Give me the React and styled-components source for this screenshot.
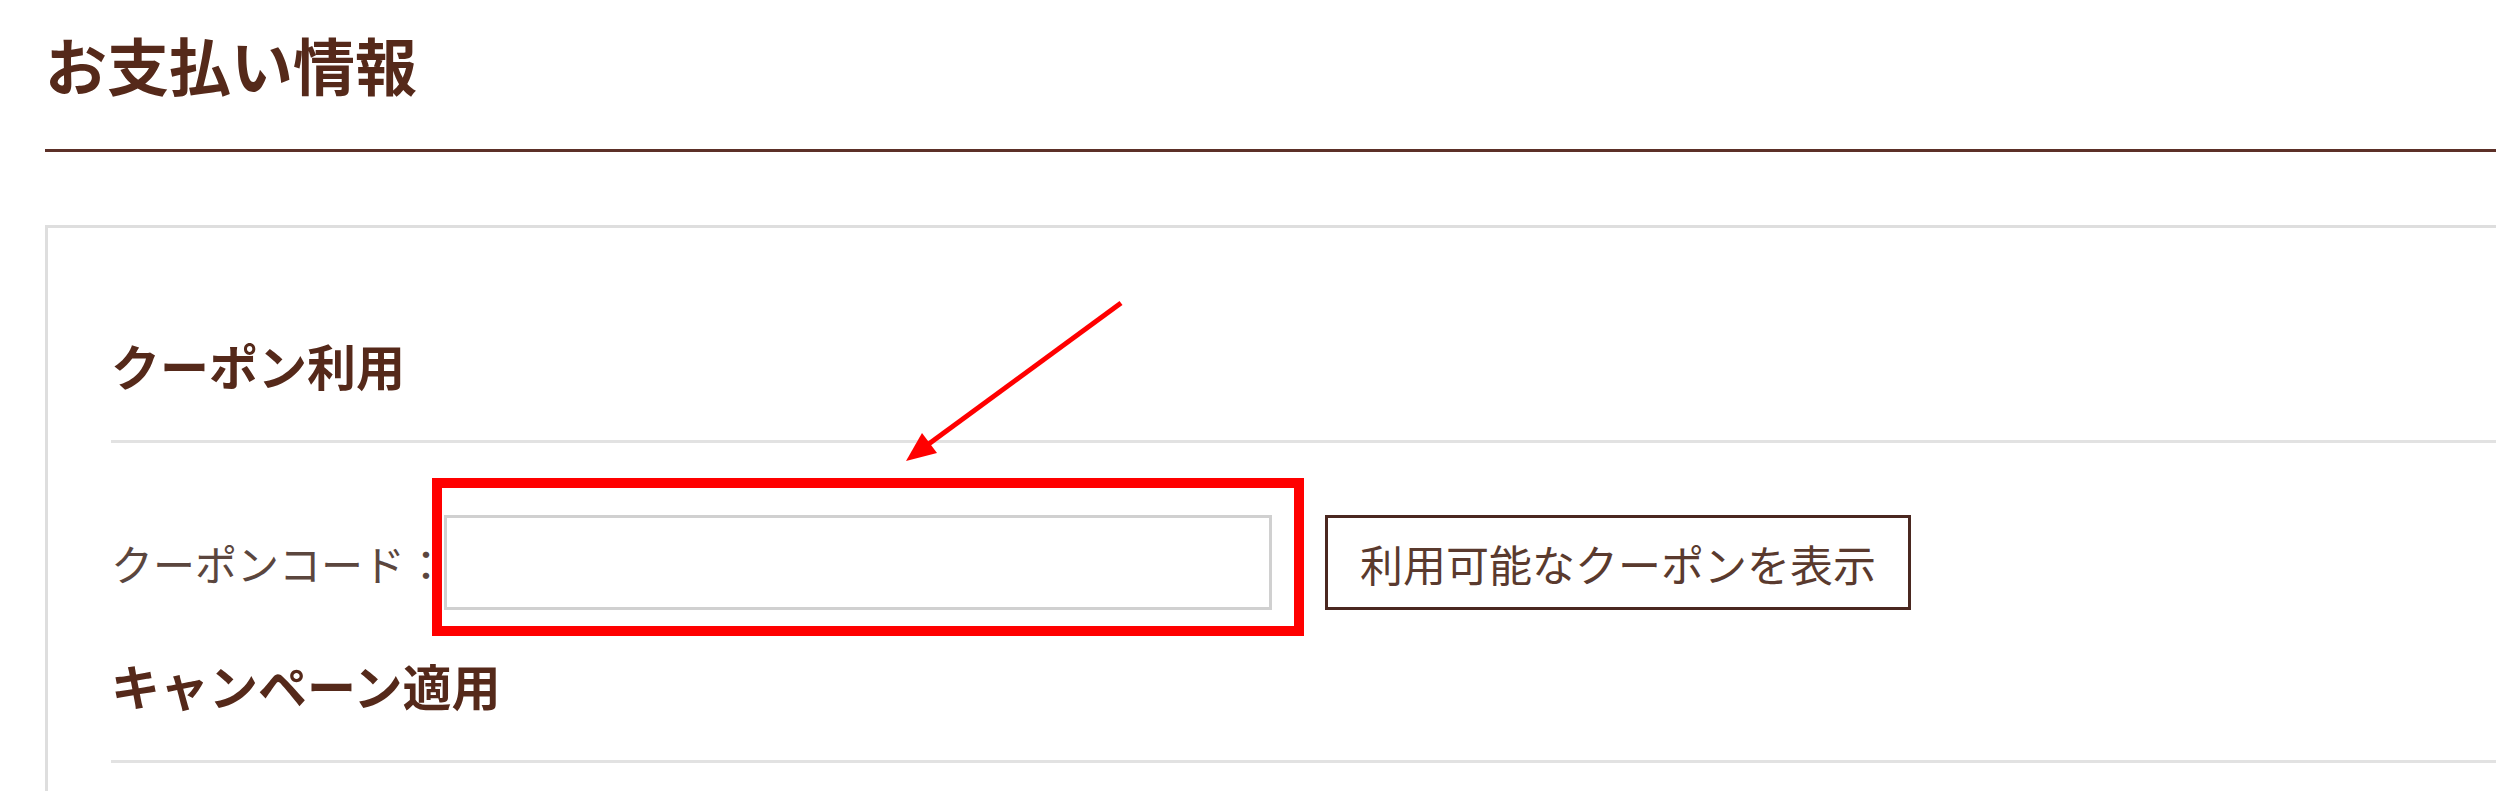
import styled, { createGlobalStyle } from "styled-components";

const GlobalStyle = createGlobalStyle`
  body {
    margin: 0;
    background: #fff;
    font-family: "Noto Sans CJK JP", "Noto Sans", sans-serif;
    overflow: hidden;
  }
`

const Page = styled.div`
  padding-left: 45px;
`

const Title = styled.h1`
  margin: 0;
  padding: 33px 0 54px;
  font-size: 62px;
  line-height: 1;
  font-weight: 700;
  color: #55291a;
  border-bottom: 3px solid #5c3028;
`

const Panel = styled.section`
  margin-top: 73px;
  padding-left: 63px;
  border: 3px solid #dedede;
  border-right: none;
  border-bottom: none;
  min-height: 600px;
`

const SectionTitle = styled.h2`
  margin: ${(p) => p.top}px 0 0;
  padding-bottom: 51px;
  font-size: 49px;
  line-height: 1;
  font-weight: 700;
  color: #55291a;
  border-bottom: 3px solid #e2e2e2;
`

const Row = styled.div`
  display: flex;
  align-items: center;
  margin-top: 72px;
`

const Label = styled.label`
  font-size: 42px;
  line-height: 1;
  color: #5b463e;
  margin-right: -3px;
`

const InputWrap = styled.div`
  position: relative;
`

const Input = styled.input`
  display: block;
  box-sizing: border-box;
  width: 828px;
  height: 95px;
  border: 3px solid #d0d0d0;
  background: #fff;
  outline: none;
`

const Highlight = styled.div`
  position: absolute;
  top: -37px;
  left: -12px;
  right: -32px;
  bottom: -26px;
  border: 10px solid #ff0000;
  pointer-events: none;
`

const Arrow = styled.svg`
  position: absolute;
  left: 440px;
  top: -220px;
  overflow: visible;
`

const Button = styled.button`
  box-sizing: border-box;
  margin-left: 53px;
  width: 586px;
  height: 95px;
  border: 3px solid #4a2820;
  background: #fff;
  font-family: inherit;
  font-size: 43px;
  color: #5a3a2e;
  padding: 0;
`

export default function App() {
  return (
    <>
      <GlobalStyle />
      <Page>
        <Title>お支払い情報</Title>
        <Panel>
          <SectionTitle top={112}>クーポン利用</SectionTitle>
          <Row>
            <Label>クーポンコード：</Label>
            <InputWrap>
              <Input type="text" />
              <Highlight />
              <Arrow width="260" height="180" viewBox="0 0 260 180">
                <line x1="237" y1="8" x2="44" y2="149.5" stroke="#ff0000" strokeWidth="5" />
                <polygon points="22,166 53,158 38,138" fill="#ff0000" />
              </Arrow>
            </InputWrap>
            <Button>利用可能なクーポンを表示</Button>
          </Row>
          <SectionTitle top={50}>キャンペーン適用</SectionTitle>
        </Panel>
      </Page>
    </>
  );
}
